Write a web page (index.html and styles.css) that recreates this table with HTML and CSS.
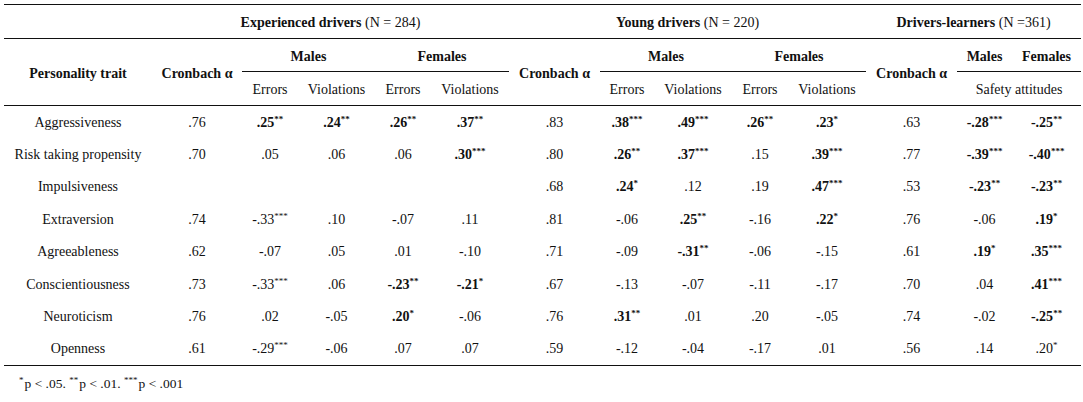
FILE: index.html
```html
<!DOCTYPE html>
<html lang="en">
<head>
<meta charset="utf-8">
<title>Personality traits and driving behaviour</title>
<link rel="stylesheet" href="styles.css">
</head>
<body>
<div class="page">
<table class="data">
  <colgroup>
    <col class="c-trait"><col class="c-alpha">
    <col class="c-err"><col class="c-vio"><col class="c-err"><col class="c-vio6">
    <col class="c-alpha7">
    <col class="c-err8"><col class="c-vio6"><col class="c-err"><col class="c-vio6">
    <col class="c-alpha7">
    <col class="c-m"><col class="c-f">
  </colgroup>
  <thead>
    <tr class="r-group">
      <th></th>
      <th colspan="5"><b>Experienced drivers</b> (N = 284)</th>
      <th colspan="5"><b>Young drivers</b> (N = 220)</th>
      <th colspan="3"><b>Drivers-learners</b> (N =361)</th>
    </tr>
    <tr class="r-sex">
      <th rowspan="2" class="span"><b>Personality trait</b></th>
      <th rowspan="2" class="span"><b>Cronbach α</b></th>
      <th colspan="2" class="sex"><b>Males</b></th>
      <th colspan="2" class="sex"><b>Females</b></th>
      <th rowspan="2" class="span"><b>Cronbach α</b></th>
      <th colspan="2" class="sex"><b>Males</b></th>
      <th colspan="2" class="sex"><b>Females</b></th>
      <th rowspan="2" class="span"><b>Cronbach α</b></th>
      <th class="sex"><b>Males</b></th>
      <th class="sex"><b>Females</b></th>
    </tr>
    <tr class="r-sub">
      <th>Errors</th><th>Violations</th><th>Errors</th><th>Violations</th>
      <th>Errors</th><th>Violations</th><th>Errors</th><th>Violations</th>
      <th colspan="2">Safety attitudes</th>
    </tr>
  </thead>
  <tbody>
    <tr>
      <td>Aggressiveness</td><td>.76</td>
      <td><b>.25<sup>**</sup></b></td><td><b>.24<sup>**</sup></b></td><td><b>.26<sup>**</sup></b></td><td><b>.37<sup>**</sup></b></td>
      <td>.83</td>
      <td><b>.38<sup>***</sup></b></td><td><b>.49<sup>***</sup></b></td><td><b>.26<sup>**</sup></b></td><td><b>.23<sup>*</sup></b></td>
      <td>.63</td>
      <td><b>-.28<sup>***</sup></b></td><td><b>-.25<sup>**</sup></b></td>
    </tr>
    <tr>
      <td>Risk taking propensity</td><td>.70</td>
      <td>.05</td><td>.06</td><td>.06</td><td><b>.30<sup>***</sup></b></td>
      <td>.80</td>
      <td><b>.26<sup>**</sup></b></td><td><b>.37<sup>***</sup></b></td><td>.15</td><td><b>.39<sup>***</sup></b></td>
      <td>.77</td>
      <td><b>-.39<sup>***</sup></b></td><td><b>-.40<sup>***</sup></b></td>
    </tr>
    <tr>
      <td>Impulsiveness</td><td></td>
      <td></td><td></td><td></td><td></td>
      <td>.68</td>
      <td><b>.24<sup>*</sup></b></td><td>.12</td><td>.19</td><td><b>.47<sup>***</sup></b></td>
      <td>.53</td>
      <td><b>-.23<sup>**</sup></b></td><td><b>-.23<sup>**</sup></b></td>
    </tr>
    <tr>
      <td>Extraversion</td><td>.74</td>
      <td>-.33<sup>***</sup></td><td>.10</td><td>-.07</td><td>.11</td>
      <td>.81</td>
      <td>-.06</td><td><b>.25<sup>**</sup></b></td><td>-.16</td><td><b>.22<sup>*</sup></b></td>
      <td>.76</td>
      <td>-.06</td><td><b>.19<sup>*</sup></b></td>
    </tr>
    <tr>
      <td>Agreeableness</td><td>.62</td>
      <td>-.07</td><td>.05</td><td>.01</td><td>-.10</td>
      <td>.71</td>
      <td>-.09</td><td><b>-.31<sup>**</sup></b></td><td>-.06</td><td>-.15</td>
      <td>.61</td>
      <td><b>.19<sup>*</sup></b></td><td><b>.35<sup>***</sup></b></td>
    </tr>
    <tr>
      <td>Conscientiousness</td><td>.73</td>
      <td>-.33<sup>***</sup></td><td>.06</td><td><b>-.23<sup>**</sup></b></td><td><b>-.21<sup>*</sup></b></td>
      <td>.67</td>
      <td>-.13</td><td>-.07</td><td>-.11</td><td>-.17</td>
      <td>.70</td>
      <td>.04</td><td><b>.41<sup>***</sup></b></td>
    </tr>
    <tr>
      <td>Neuroticism</td><td>.76</td>
      <td>.02</td><td>-.05</td><td><b>.20<sup>*</sup></b></td><td>-.06</td>
      <td>.76</td>
      <td><b>.31<sup>**</sup></b></td><td>.01</td><td>.20</td><td>-.05</td>
      <td>.74</td>
      <td>-.02</td><td><b>-.25<sup>**</sup></b></td>
    </tr>
    <tr>
      <td>Openness</td><td>.61</td>
      <td>-.29<sup>***</sup></td><td>-.06</td><td>.07</td><td>.07</td>
      <td>.59</td>
      <td>-.12</td><td>-.04</td><td>-.17</td><td>.01</td>
      <td>.56</td>
      <td>.14</td><td>.20<sup>*</sup></td>
    </tr>
  </tbody>
</table>
<p class="note"><sup>*</sup>p &lt; .05. <sup>**</sup>p &lt; .01. <sup>***</sup>p &lt; .001</p>
</div>
</body>
</html>
```

FILE: styles.css
```css
html, body {
  margin: 0;
  padding: 0;
  background: #ffffff;
}

.page {
  padding: 4px 0 0 4px;
  font-family: "Liberation Serif", "Times New Roman", serif;
  font-size: 14px;
  color: #111111;
}

.data {
  width: 1077px;
  table-layout: fixed;
  border-collapse: separate;
  border-spacing: 0;
  border-top: 1px solid #111111;
  border-bottom: 1px solid #111111;
}

.c-trait { width: 148px; }
.c-alpha { width: 90px; }
.c-err { width: 56px; }
.c-vio { width: 77px; }
.c-vio6 { width: 78px; }
.c-alpha7 { width: 91px; }
.c-err8 { width: 54px; }
.c-m { width: 55px; }
.c-f { width: 69px; }

.data th,
.data td {
  padding: 0;
  text-align: center;
  vertical-align: middle;
  line-height: 15px;
  font-weight: normal;
  white-space: nowrap;
}

.data b {
  font-weight: bold;
}

.r-group th {
  padding: 10px 0 8px;
  border-bottom: 1px solid #111111;
}

.r-sex th {
  padding: 10px 0 7px;
}

.r-sex th.sex {
  border-bottom: 1px solid #111111;
}

.r-sex th.span,
.r-sub th {
  border-bottom: 1px solid #111111;
}

.r-sub th {
  padding: 10px 0 8px;
}

.data tbody tr {
  height: 32.4px;
}

sup {
  font-size: 9px;
  line-height: 0;
  vertical-align: 5px;
}

.note {
  margin: 10px 0 0 15px;
  font-size: 13.5px;
  line-height: 15px;
}

.note sup {
  margin-right: 1px;
}
```
